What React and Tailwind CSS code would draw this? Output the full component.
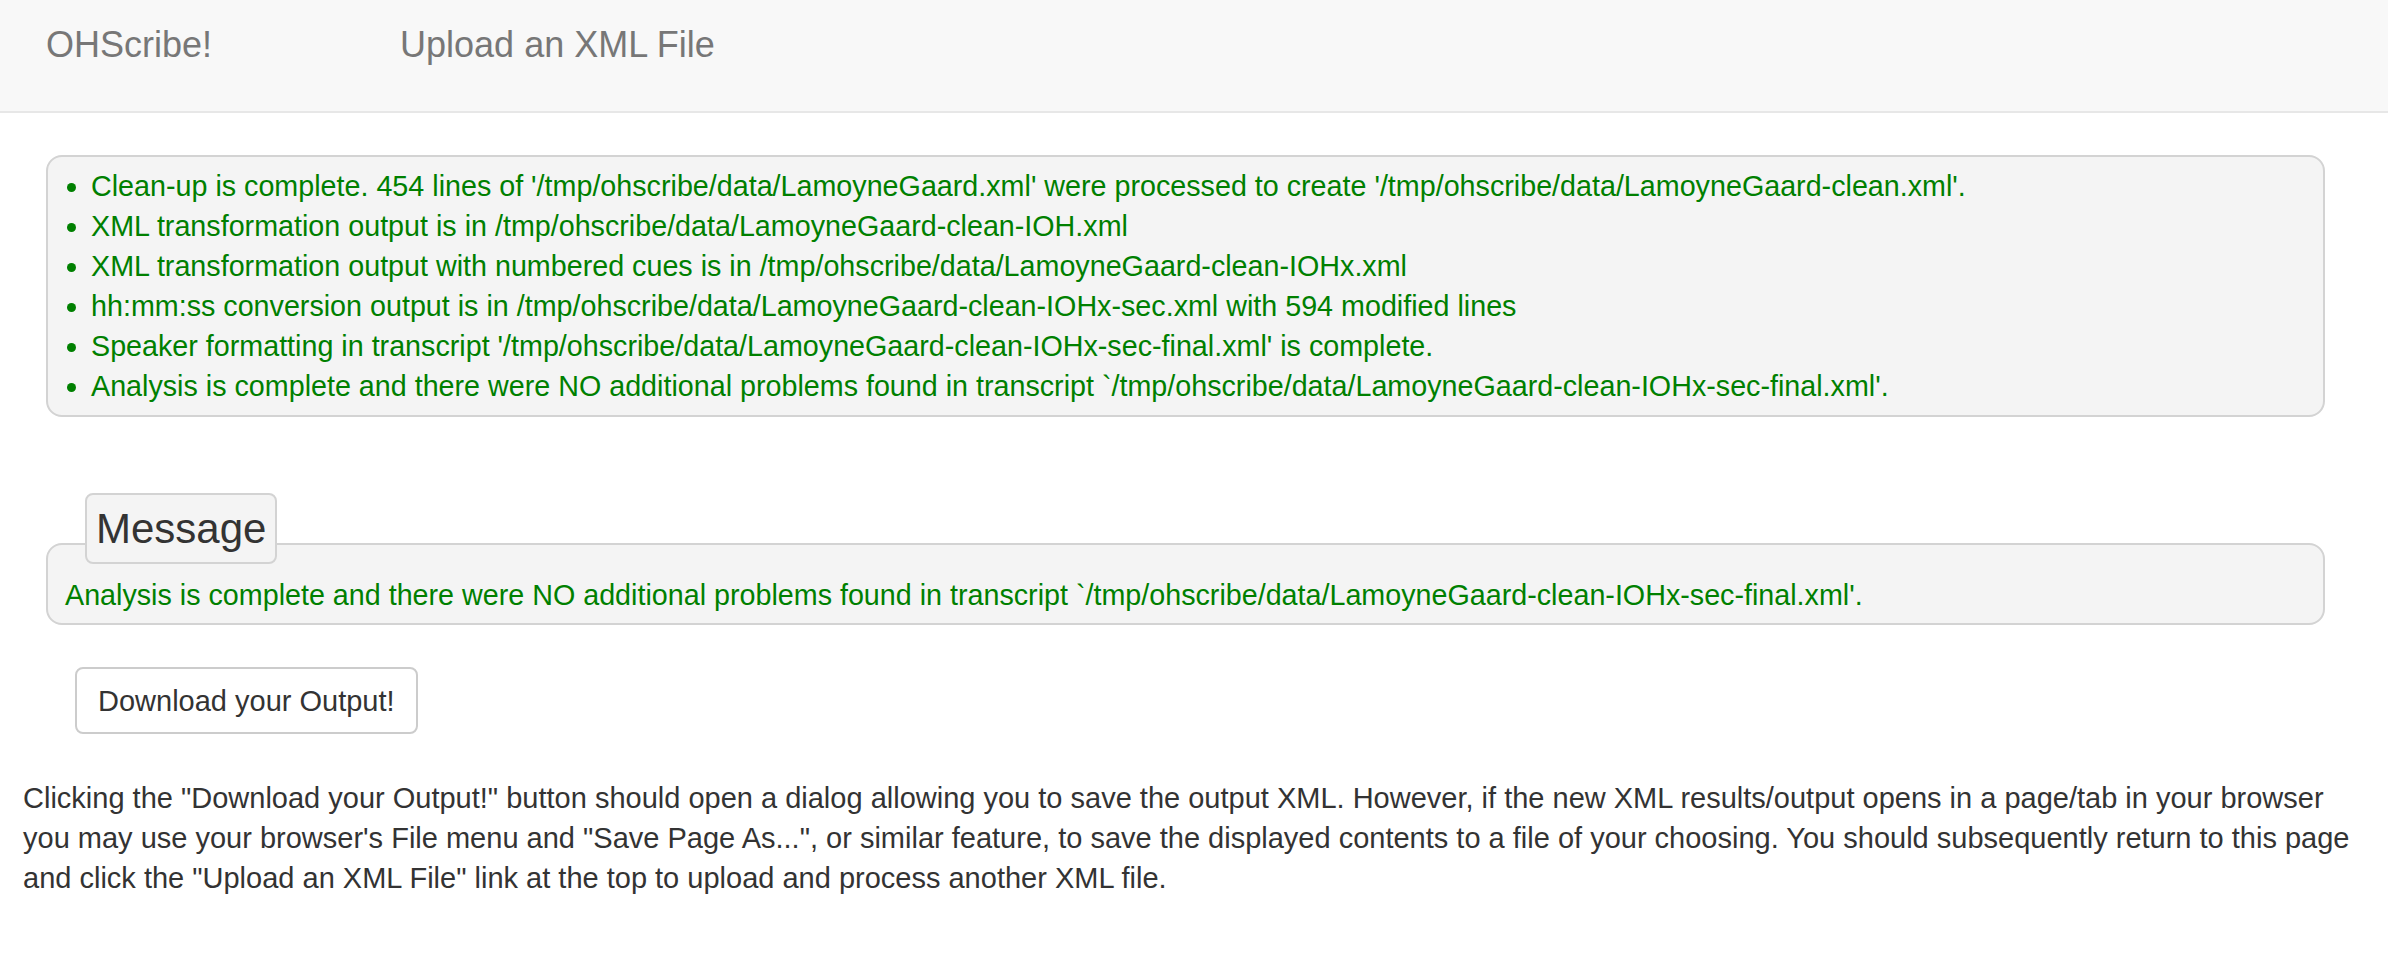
import React from 'react';

const lines = [
    "Clean-up is complete. 454 lines of '/tmp/ohscribe/data/LamoyneGaard.xml' were processed to create '/tmp/ohscribe/data/LamoyneGaard-clean.xml'.",
    'XML transformation output is in /tmp/ohscribe/data/LamoyneGaard-clean-IOH.xml',
    'XML transformation output with numbered cues is in /tmp/ohscribe/data/LamoyneGaard-clean-IOHx.xml',
    'hh:mm:ss conversion output is in /tmp/ohscribe/data/LamoyneGaard-clean-IOHx-sec.xml with 594 modified lines',
    "Speaker formatting in transcript '/tmp/ohscribe/data/LamoyneGaard-clean-IOHx-sec-final.xml' is complete.",
    "Analysis is complete and there were NO additional problems found in transcript `/tmp/ohscribe/data/LamoyneGaard-clean-IOHx-sec-final.xml'.",
];

const App = () => {
    return (
        <div className="min-h-[954px] bg-white font-['Liberation_Sans',Arial,sans-serif] text-[29px] leading-[40px] text-[#333]">
            {/* Navbar */}
            <nav className="h-[113px] bg-[#f8f8f8] border-b-2 border-[#e7e7e7] flex items-start pt-[25px] text-[#777] text-[36px] leading-[40px]">
                <a className="ml-[46px]">OHScribe!</a>
                <a className="ml-[188px]">Upload an XML File</a>
            </nav>

            <div className="pt-[42px] px-[46px] pr-[63px]">
                {/* Status list */}
                <div className="bg-[#f4f4f4] border-2 border-[#d3d3d3] rounded-[16px] py-[9px]">
                    <ul className="list-disc pl-[43px] text-[#008000] text-[28.7px]">
                        {lines.map((l, i) => (
                            <li key={i}>{l}</li>
                        ))}
                    </ul>
                </div>

                {/* Message fieldset */}
                <div className="mt-[76px] flex flex-col">
                    <div className="ml-[39px] self-start relative z-10 -mb-[21px] bg-[#f4f4f4] border-2 border-[#d3d3d3] rounded-[8px] px-[9px] h-[71px] flex items-center text-[42px] leading-[48px] text-[#333]">
                        Message
                    </div>
                    <div className="bg-[#f4f4f4] border-2 border-[#d3d3d3] rounded-[16px] pt-[30px] pb-[8px] pl-[17px] text-[#008000] text-[28.7px]">
                        Analysis is complete and there were NO additional problems found in transcript `/tmp/ohscribe/data/LamoyneGaard-clean-IOHx-sec-final.xml'.
                    </div>
                </div>

                <button className="mt-[42px] ml-[29px] h-[67px] px-[21px] bg-white border-2 border-[#cccccc] rounded-[8px] text-[#333] flex items-center">
                    Download your Output!
                </button>
            </div>

            <p className="mt-[44px] pl-[23px] pr-[20px]">
                Clicking the "Download your Output!" button should open a dialog allowing you to save the output XML. However, if the new XML results/output opens in a page/tab in your browser you may use your browser's File menu and "Save Page As...", or similar feature, to save the displayed contents to a file of your choosing. You should subsequently return to this page and click the "Upload an XML File" link at the top to upload and process another XML file.
            </p>
        </div>
    );
};

export default App;
